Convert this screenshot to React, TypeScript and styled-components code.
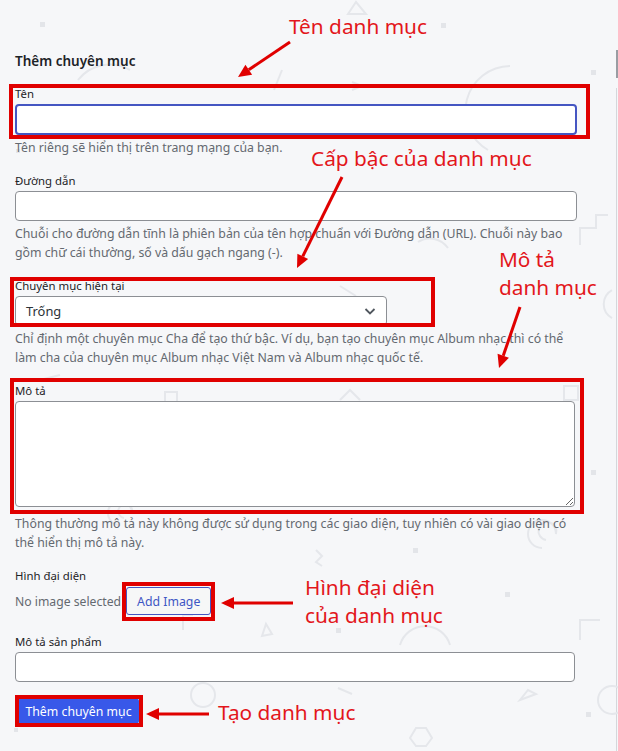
import styled, { createGlobalStyle } from 'styled-components';

const GlobalStyle = createGlobalStyle`
  html, body {
    margin: 0;
    padding: 0;
    background: #f6f7f9;
  }
  body {
    font-family: "Noto Sans", "Open Sans", sans-serif;
    color: #1d2327;
  }
`;

const Page = styled.div`
  position: relative;
  width: 618px;
  height: 751px;
  overflow: hidden;
  display: grid;
  grid-template-columns: 616px 2px;
`;

const Backdrop = styled.svg`
  position: absolute;
  left: 0;
  top: 0;
  z-index: 0;
  pointer-events: none;
`;

const Main = styled.div`
  position: relative;
  z-index: 1;
  padding: 51px 0 0 15px;
`;

const Side = styled.div`
  display: flex;
  flex-direction: column;
`;

const SideTab = styled.div`
  margin-top: 50px;
  height: 28px;
  background: #9a9da3;
`;

const SidePanel = styled.div`
  margin-top: 10px;
  flex: 1;
  border-left: 1px solid #d5d7db;
`;

const Heading = styled.h2`
  margin: 0 0 15px;
  font-size: 13.5px;
  line-height: 20px;
  font-weight: 600;
  color: #1d2327;
`;

const Field = styled.div<{ $gap?: number }>`
  margin-bottom: ${p => p.$gap ?? 16}px;
`;

const Label = styled.label`
  display: block;
  font-size: 11.4px;
  line-height: 16px;
  margin-bottom: 2px;
  color: #1d2327;
`;

const TextInput = styled.input<{ $width: number; $focused?: boolean }>`
  display: block;
  box-sizing: border-box;
  width: ${p => p.$width}px;
  height: ${p => (p.$focused ? 31 : 30)}px;
  margin: 0;
  padding: 0 8px;
  font: inherit;
  font-size: 13px;
  background: #fff;
  border: ${p => (p.$focused ? '2px solid #4556c2' : '1px solid #8c8f94')};
  border-radius: 4px;
  outline: none;
`;

const SelectBox = styled.div<{ $width: number }>`
  box-sizing: border-box;
  width: ${p => p.$width}px;
  height: 30px;
  display: flex;
  align-items: center;
  justify-content: space-between;
  padding: 0 9px 0 10px;
  background: #fff;
  border: 1px solid #8c8f94;
  border-radius: 4px;
  font-size: 12.9px;
  color: #2c3338;
`;

const TextArea = styled.textarea<{ $width: number }>`
  display: block;
  box-sizing: border-box;
  width: ${p => p.$width}px;
  height: 106px;
  margin: 0;
  font: inherit;
  background: #fff;
  border: 1px solid #8c8f94;
  border-radius: 4px;
  outline: none;
`;

const Hint = styled.p<{ $top?: number }>`
  margin: ${p => p.$top ?? 3}px 0 0;
  font-size: 12.3px;
  line-height: 19px;
  color: #646970;
  white-space: nowrap;
`;

const ImageRow = styled.div`
  display: flex;
  align-items: center;
  gap: 5px;
  margin-top: 3px;
`;

const Muted = styled.span`
  font-size: 12.2px;
  color: #646970;
`;

const OutlineButton = styled.button`
  height: 28px;
  padding: 0 10px;
  font: inherit;
  font-size: 12.3px;
  color: #3e56c4;
  background: #f6f7f7;
  border: 1px solid #4556c2;
  border-radius: 3px;
`;

const PrimaryButton = styled.button`
  width: 121px;
  height: 26px;
  margin: 0 0 0 3px;
  padding: 0;
  font: inherit;
  font-size: 12.3px;
  color: #fff;
  background: #3858e9;
  border: 1px solid #3858e9;
  border-radius: 3px;
`;

const Overlay = styled.div`
  position: absolute;
  inset: 0;
  z-index: 2;
  pointer-events: none;
`;

const Frame = styled.div<{ $x: number; $y: number; $w: number; $h: number }>`
  position: absolute;
  left: ${p => p.$x}px;
  top: ${p => p.$y}px;
  width: ${p => p.$w}px;
  height: ${p => p.$h}px;
  box-sizing: border-box;
  border: 4px solid #e00000;
`;

const Note = styled.div<{ $x: number; $y: number }>`
  position: absolute;
  left: ${p => p.$x}px;
  top: ${p => p.$y}px;
  font-size: 20.8px;
  line-height: 28px;
  color: #e3161b;
  white-space: nowrap;
`;

const Arrows = styled.svg`
  position: absolute;
  left: 0;
  top: 0;
`;

const RED = '#e00000';

function Arrow({ x1, y1, x2, y2 }: { x1: number; y1: number; x2: number; y2: number }) {
  const a = Math.atan2(y2 - y1, x2 - x1);
  const len = 13;
  const half = 6;
  const bx = x2 - len * Math.cos(a);
  const by = y2 - len * Math.sin(a);
  const px = -Math.sin(a) * half;
  const py = Math.cos(a) * half;
  return (
    <g>
      <line x1={x1} y1={y1} x2={bx} y2={by} stroke={RED} strokeWidth={3} />
      <polygon
        points={`${x2},${y2} ${bx + px},${by + py} ${bx - px},${by - py}`}
        fill={RED}
      />
    </g>
  );
}

const Chevron = () => (
  <svg width="14" height="14" viewBox="0 0 14 14">
    <path d="M2.5 5 L7 9.5 L11.5 5" fill="none" stroke="#50575e" strokeWidth="1.8" />
  </svg>
);

// faint background pattern
const Pattern = () => (
  <Backdrop width="618" height="751" viewBox="0 0 618 751">
    <g fill="none" stroke="#e5e7eb" strokeWidth="2">
      <path d="M348 14 L356 2 L366 14 Z" />
      <path d="M488 150 A45 45 0 0 1 510 66" />
      <line x1="274" y1="90" x2="282" y2="70" />
      <path d="M352 82 L362 86 L352 90" />
      <path d="M580 245 L580 228 L596 228 L596 215 L608 215" />
      <path d="M418 242 A22 22 0 0 1 448 248" />
      <path d="M612 318 A16 16 0 0 1 612 290" />
      <line x1="340" y1="286" x2="356" y2="296" />
      <path d="M340 400 L350 390 L360 400" />
      <rect x="564" y="386" width="14" height="14" />
      <path d="M542 548 A14 14 0 1 1 556 534 A9 9 0 1 0 546 540" />
      <path d="M316 550 L322 556 L316 562 L322 566" />
      <path d="M580 640 L580 620 L600 620" />
      <path d="M400 645 A26 26 0 0 1 450 645" />
      <path d="M520 700 L536 694 L528 690 Z" />
      <circle cx="612" cy="700" r="14" />
      <path d="M410 738 L416 728 L426 728 L432 738 L426 746 L416 746 Z" />
      <line x1="338" y1="688" x2="352" y2="694" />
      <path d="M262 636 L266 624 L272 634 Z" />
      <circle cx="203" cy="695" r="12" />
      <path d="M183 630 L183 615 L193 615" />
      <rect x="165" y="392" width="12" height="12" />
      <path d="M120 525 A12 12 0 1 1 132 513 A7 7 0 1 0 124 518" />
      <line x1="40" y1="380" x2="60" y2="375" />
      <path d="M78 80 A40 40 0 0 1 130 70" />
    </g>
    <g fill="#e3e5e9">
      <rect x="40" y="22" width="5" height="5" />
      <rect x="441" y="23" width="5" height="5" />
      <rect x="591" y="70" width="5" height="5" />
      <rect x="591" y="470" width="5" height="5" />
      <rect x="413" y="548" width="5" height="5" />
      <rect x="505" y="592" width="5" height="5" />
      <rect x="336" y="628" width="5" height="5" />
      <rect x="16" y="149" width="4" height="4" />
      <rect x="188" y="231" width="4" height="4" />
      <rect x="14" y="728" width="4" height="4" />
      <rect x="586" y="712" width="5" height="5" />
    </g>
  </Backdrop>
);

export default function App() {
  return (
    <Page>
      <GlobalStyle />
      <Pattern />
      <Main>
        <Heading>Thêm chuyên mục</Heading>
        <Field>
          <Label>Tên</Label>
          <TextInput $width={562} $focused />
          <Hint>Tên riêng sẽ hiển thị trên trang mạng của bạn.</Hint>
        </Field>
        <Field>
          <Label>Đường dẫn</Label>
          <TextInput $width={562} />
          <Hint>
            Chuỗi cho đường dẫn tĩnh là phiên bản của tên hợp chuẩn với Đường dẫn (URL). Chuỗi này bao
            <br />
            gồm chữ cái thường, số và dấu gạch ngang (-).
          </Hint>
        </Field>
        <Field>
          <Label>Chuyên mục hiện tại</Label>
          <SelectBox $width={372}>
            <span>Trống</span>
            <Chevron />
          </SelectBox>
          <Hint>
            Chỉ định một chuyên mục Cha để tạo thứ bậc. Ví dụ, bạn tạo chuyên mục Album nhạc thì có thể
            <br />
            làm cha của chuyên mục Album nhạc Việt Nam và Album nhạc quốc tế.
          </Hint>
        </Field>
        <Field>
          <Label>Mô tả</Label>
          <TextArea $width={560} />
          <Hint $top={7}>
            Thông thường mô tả này không được sử dụng trong các giao diện, tuy nhiên có vài giao diện có
            <br />
            thể hiển thị mô tả này.
          </Hint>
        </Field>
        <Field $gap={19}>
          <Label>Hình đại diện</Label>
          <ImageRow>
            <Muted>No image selected</Muted>
            <OutlineButton>Add Image</OutlineButton>
          </ImageRow>
        </Field>
        <Field>
          <Label>Mô tả sản phẩm</Label>
          <TextInput $width={560} />
        </Field>
        <PrimaryButton>Thêm chuyên mục</PrimaryButton>
      </Main>
      <Side>
        <SideTab />
        <SidePanel />
      </Side>
      <Overlay>
        <Frame $x={9} $y={84} $w={581} $h={55} />
        <Frame $x={10} $y={277} $w={425} $h={50} />
        <Frame $x={10} $y={378} $w={574} $h={136} />
        <Frame $x={122} $y={582} $w={93} $h={39} />
        <Frame $x={15} $y={695} $w={128} $h={32} />
        <Note $x={289} $y={12}>Tên danh mục</Note>
        <Note $x={311} $y={144}>Cấp bậc của danh mục</Note>
        <Note $x={499} $y={245}>
          Mô tả
          <br />
          danh mục
        </Note>
        <Note $x={305} $y={573}>
          Hình đại diện
          <br />
          của danh mục
        </Note>
        <Note $x={218} $y={698}>Tạo danh mục</Note>
        <Arrows width="618" height="751" viewBox="0 0 618 751">
          <Arrow x1={290} y1={42} x2={238} y2={77} />
          <Arrow x1={342} y1={177} x2={297} y2={268} />
          <Arrow x1={520} y1={307} x2={499} y2={368} />
          <Arrow x1={293} y1={603} x2={221} y2={603} />
          <Arrow x1={209} y1={714} x2={146} y2={714} />
        </Arrows>
      </Overlay>
    </Page>
  );
}
